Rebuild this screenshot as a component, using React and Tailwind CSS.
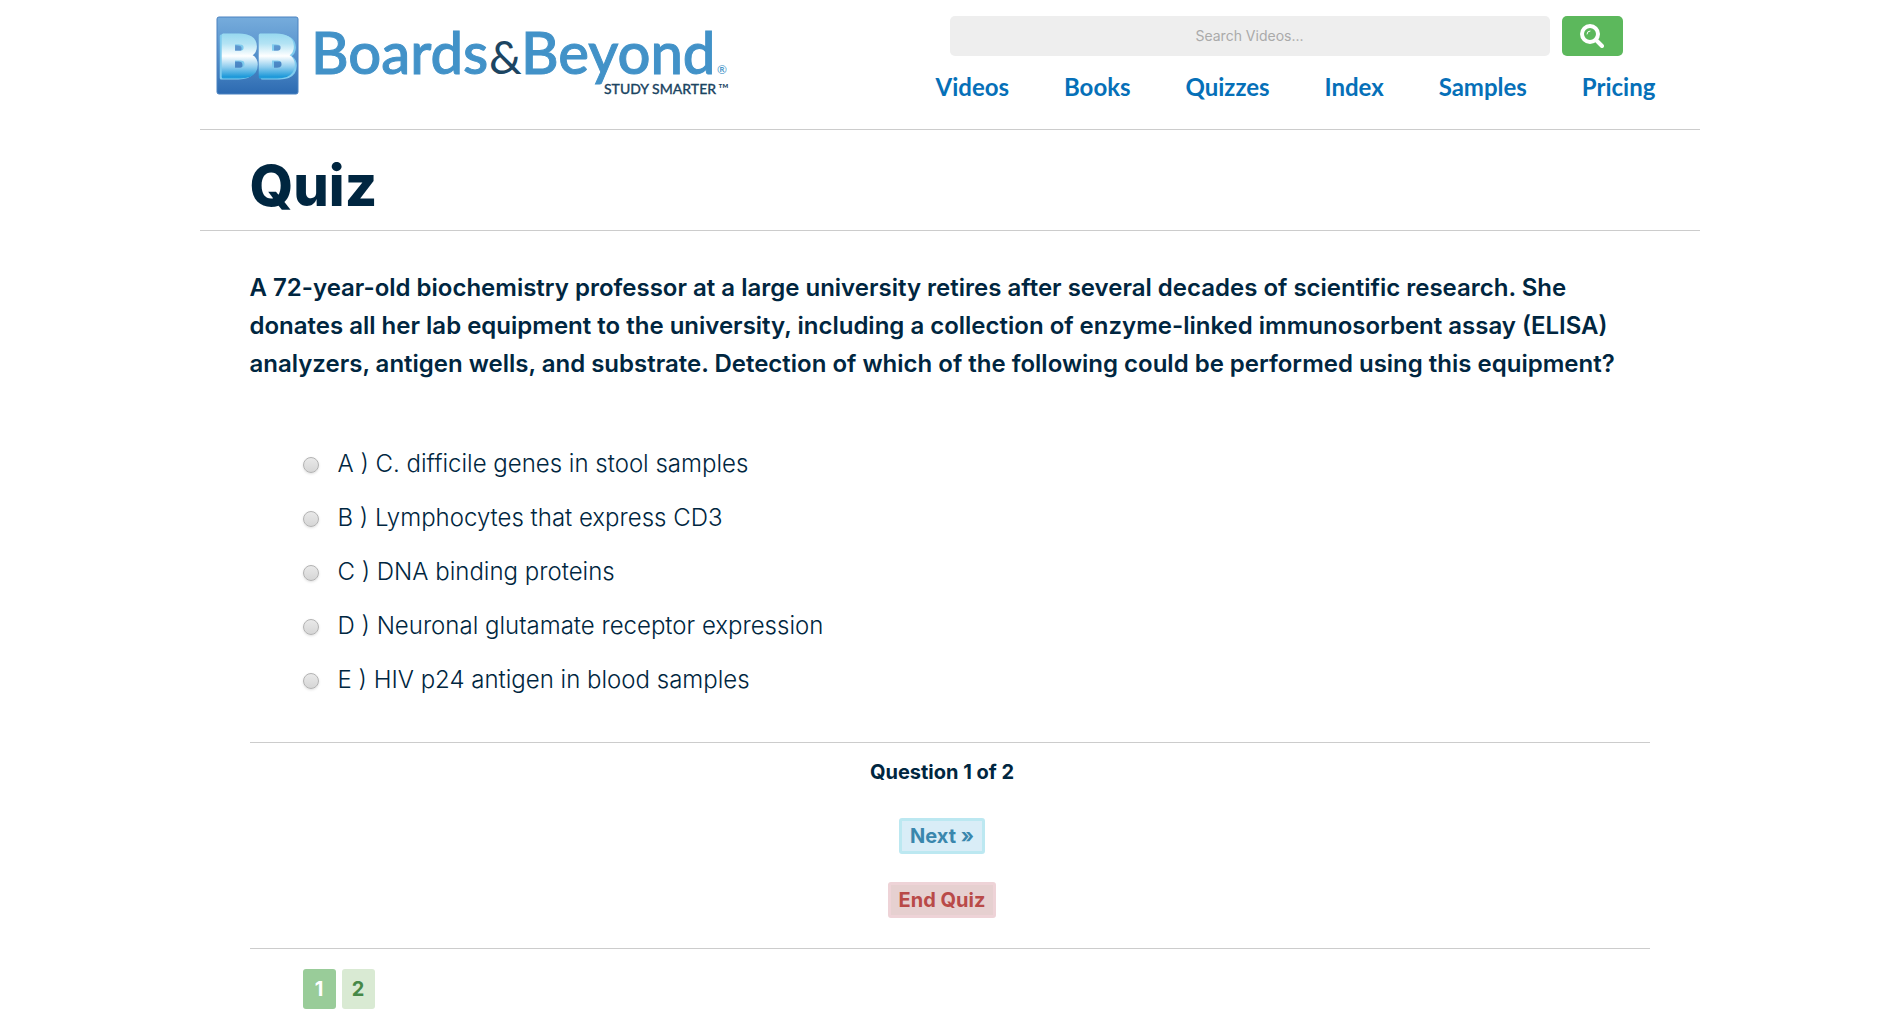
const navItems = ["Videos", "Books", "Quizzes", "Index", "Samples", "Pricing"];

const answers = [
  ["A", "C. difficile genes in stool samples"],
  ["B", "Lymphocytes that express CD3"],
  ["C", "DNA binding proteins"],
  ["D", "Neuronal glutamate receptor expression"],
  ["E", "HIV p24 antigen in blood samples"],
];

function Logo() {
  return (
    <svg width="514" height="82" viewBox="0 0 514 82" role="img" aria-label="Boards & Beyond, Study Smarter">
      <defs>
        <linearGradient id="tile" x1="0" y1="0" x2="0" y2="1">
          <stop offset="0" stopColor="#76acdc" />
          <stop offset="0.5" stopColor="#5590cb" />
          <stop offset="1" stopColor="#2c6ab1" />
        </linearGradient>
        <linearGradient id="face" gradientUnits="userSpaceOnUse" x1="0" y1="16" x2="0" y2="66">
          <stop offset="0" stopColor="#8fd6ee" />
          <stop offset="0.25" stopColor="#b3e3f4" />
          <stop offset="0.5" stopColor="#ffffff" />
          <stop offset="0.72" stopColor="#8fcdee" />
          <stop offset="0.92" stopColor="#1b98d9" />
          <stop offset="1" stopColor="#4fb6e4" />
        </linearGradient>
      </defs>
      <rect x="1" y="2" width="81" height="77" rx="2" fill="url(#tile)" stroke="#4a82c0" />
      <g
        fontFamily="Roboto, sans-serif"
        fontWeight="900"
        fontSize="60"
        fill="url(#face)"
        stroke="url(#face)"
        strokeWidth="3"
        strokeLinejoin="round"
      >
        <text x="4" y="62" className="drop-shadow-[-2px_1px_0_#7fcbee]">B</text>
        <text x="41" y="62" className="drop-shadow-[2px_1px_0_#7fcbee]">B</text>
      </g>
      <g fontFamily="Lato, sans-serif" fontWeight="500">
        <text x="95" y="59" fontSize="58" fill="#4292c8" stroke="#4292c8" strokeWidth="1">Boards</text>
        <text x="273" y="59" fontSize="46" fontWeight="400" fill="#1c4562">&amp;</text>
        <text x="305" y="59" fontSize="58" fill="#4292c8" stroke="#4292c8" strokeWidth="1">Beyond</text>
        <text x="501" y="59" fontSize="12" fill="#4292c8">®</text>
        <text x="388" y="79" fontSize="14" fill="#1c4562" stroke="#1c4562" strokeWidth="0.3">STUDY SMARTER</text>
        <text x="502" y="79" fontSize="14" fill="#1c4562">™</text>
      </g>
    </svg>
  );
}

function SearchIcon() {
  return (
    <svg width="24" height="24" viewBox="0 0 24 24" fill="none" stroke="#fff" strokeLinecap="round">
      <circle cx="10" cy="10" r="8" strokeWidth="4" />
      <path d="M16 16l6 6" strokeWidth="4" />
      <path d="M7 10a3 3 0 0 1 3-3" strokeWidth="1" />
    </svg>
  );
}

export default function App() {
  return (
    <div className="mx-auto max-w-[1500px] bg-white pb-6 font-['Inter',sans-serif] text-[#002640]">
      <header className="flex justify-between border-b border-[#ccc] pr-11 pl-4">
        <a href="#home" className="block pt-[15px]">
          <Logo />
        </a>
        <div className="w-[720px] pt-4 pb-[27px]">
          <form className="mr-[33px] ml-[14px] flex h-10 gap-3">
            <input
              type="text"
              aria-label="Search videos"
              placeholder="Search Videos..."
              className="min-w-0 flex-1 rounded-[5px] bg-[#eee] text-center text-sm placeholder:text-[#aaa]"
            />
            <button type="button" aria-label="Search" className="flex w-[61px] items-center justify-center rounded-[5px] bg-[#5cb85c]">
              <SearchIcon />
            </button>
          </form>
          <nav className="mt-4 flex justify-between font-['Lato',sans-serif] text-2xl leading-[30px] font-bold text-[#0670b8]">
            {navItems.map((item) => (
              <a key={item} href={"#" + item.toLowerCase()}>
                {item}
              </a>
            ))}
          </nav>
        </div>
      </header>

      <div className="border-b border-[#ccc] px-[50px] pt-5 pb-2">
        <h1 className="text-[56px] leading-[72px] font-extrabold">Quiz</h1>
      </div>

      <main className="px-[50px]">
        <p className="pt-[38px] text-2xl leading-[38px] font-semibold">
          A 72-year-old biochemistry professor at a large university retires after several decades of scientific
          research. She donates all her lab equipment to the university, including a collection of enzyme-linked
          immunosorbent assay (ELISA) analyzers, antigen wells, and substrate. Detection of which of the following could
          be performed using this equipment?
        </p>

        <fieldset className="mt-[62px] ml-[53px] flex flex-col gap-4 pb-[43px]">
          {answers.map(([letter, text]) => (
            <label key={letter} className="flex items-center gap-[19px] text-2xl leading-[38px] font-light">
              <input
                type="radio"
                name="answer"
                value={letter}
                className="mt-[2px] size-4 appearance-none rounded-full border border-[#b2b2b2] bg-linear-to-b from-[#e9e9e9] to-[#d6d6d6] shadow-sm checked:border-4 checked:border-[#0670b8]"
              />
              {letter} ) {text}
            </label>
          ))}
        </fieldset>

        <div className="flex flex-col items-center border-y border-[#ccc] pt-[13px] pr-[15px] pb-[30px] text-xl font-bold">
          <p className="leading-8">Question 1 of 2</p>
          <button type="button" className="mt-[30px] h-9 rounded-[3px] border-3 border-[#bce8f1] bg-[#d9edf7] px-2 leading-7 text-[#3a87ad]">
            Next »
          </button>
          <button type="button" className="mt-7 h-9 rounded-[3px] border-3 border-[#eed3d7] bg-[#e6d0d0] px-2 leading-7 text-[#b94a48]">
            End Quiz
          </button>
        </div>

        <div className="mt-5 ml-[53px] flex gap-[6px] text-xl font-bold">
          <button type="button" className="h-10 w-[33px] rounded-[3px] bg-[#9c9] text-white">
            1
          </button>
          <button type="button" className="h-10 w-[33px] rounded-[3px] bg-[#d9ead3] text-[#468847]">
            2
          </button>
        </div>
      </main>
    </div>
  );
}
